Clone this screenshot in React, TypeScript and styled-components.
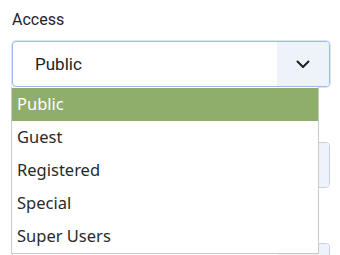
import styled, { createGlobalStyle } from "styled-components";

const options = ["Public", "Guest", "Registered", "Special", "Super Users"];

const GlobalStyle = createGlobalStyle`
  body {
    margin: 0;
    background: #fff;
    font-family: Roboto, "Liberation Sans", sans-serif;
    overflow: hidden;
  }
`;

const App = () => {
  return (
    <>
      <GlobalStyle />
      <Form>
        <Field>
          <Label>Access</Label>
          <SelectWrap>
            <Select $focused>
              <span className="value">Public</span>
              <span className="caret">
                <svg width="14" height="9" viewBox="0 0 14 9" fill="none">
                  <path d="M1.5 1.5 7 7l5.5-5.5" stroke="#1c1f23" strokeWidth="2" strokeLinecap="round" strokeLinejoin="round" />
                </svg>
              </span>
            </Select>
            <Menu>
              {options.map((o, i) => (
                <Option key={o} $active={i === 0}>
                  {o}
                </Option>
              ))}
            </Menu>
          </SelectWrap>
        </Field>
        {/* fields hidden under the open list */}
        <Field>
          <Label />
          <Select>
            <span className="value" />
            <span className="caret" />
          </Select>
        </Field>
        <Field>
          <Label />
          <Select>
            <span className="value" />
            <span className="caret" />
          </Select>
        </Field>
      </Form>
    </>
  );
};

const Form = styled.div`
  padding: 8px 10px 0 12px;
  display: flex;
  flex-direction: column;
  gap: 22px;
`;

const Field = styled.div`
  display: flex;
  flex-direction: column;
  gap: 9px;
`;

const Label = styled.label`
  font-size: 16px;
  line-height: 24px;
  height: 24px;
  color: #22262a;
`;

const SelectWrap = styled.div`
  position: relative;
`;

const Select = styled.div<{ $focused?: boolean }>`
  height: 46px;
  box-sizing: border-box;
  display: flex;
  border: 1px solid ${({ $focused }) => ($focused ? "#9cbbe6" : "#c7d0de")};
  border-radius: 4px;
  overflow: hidden;
  box-shadow: ${({ $focused }) => ($focused ? "0 0 0 1px #dbe6f5" : "none")};
  .value {
    flex: 1;
    padding-left: 22px;
    font-size: 17px;
    line-height: 44px;
    color: #1d2125;
  }
  .caret {
    width: 52px;
    background: #eef2f9;
    display: flex;
    align-items: center;
    justify-content: center;
  }
`;

const Menu = styled.ul`
  position: absolute;
  top: 46px;
  left: -1px;
  width: 308px;
  margin: 0;
  padding: 1px 0 0;
  list-style: none;
  background: #fff;
  border: 1px solid #c9c9c9;
  border-top: none;
  box-sizing: border-box;
  z-index: 10;
`;

const Option = styled.li<{ $active?: boolean }>`
  height: 33px;
  line-height: 32px;
  padding-left: 5px;
  font-family: "Noto Sans", "DejaVu Sans", sans-serif;
  font-size: 16.5px;
  color: ${({ $active }) => ($active ? "#fff" : "#2a2a2a")};
  background: ${({ $active }) => ($active ? "#8fae6c" : "transparent")};
`;

export default App;
